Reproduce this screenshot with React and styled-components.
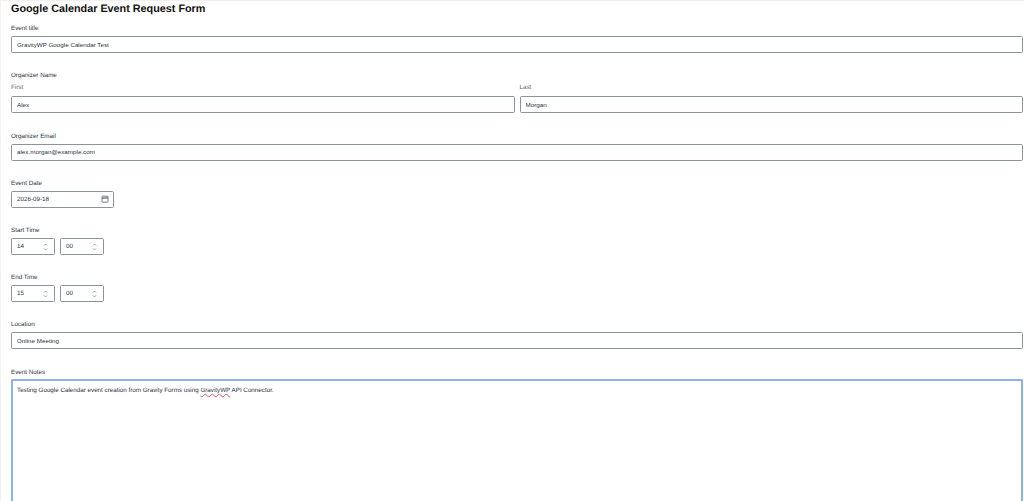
import React from "react";
import styled, { createGlobalStyle } from "styled-components";

const Global = createGlobalStyle`
  html, body { margin: 0; padding: 0; height: 501px; overflow: hidden; background: #fff; }
  body { font-family: "Liberation Sans", Arial, sans-serif; color: #1d2733; text-rendering: geometricPrecision; }
`;
const Page = styled.main`
  height: 501px; box-sizing: border-box; overflow: hidden;
  padding: 2px 1px 0 11px;
  border-top: 1px solid #f0f0f0;
  border-left: 1px solid #f2f2f2;
`;
const Title = styled.h1`
  margin: 0 0 0 -1px; font-size: 10.8px; line-height: 12px; font-weight: 700; color: #111;
  height: 12px;
`;
const Form = styled.form`
  display: flex; flex-direction: column; gap: 18.2px; margin: 9.3px 0 0 -1px;
`;
const Field = styled.div`
  display: flex; flex-direction: column;
`;
const Label = styled.label`
  font-size: 6.25px; line-height: 10px; height: 8px; color: #2b3440; margin-bottom: ${p => p.$gap ?? 4}px;
`;
const SubLabel = styled.span`
  font-size: 6.25px; line-height: 10px; height: 8px; color: #5f6670; display: block; margin-bottom: 5px;
`;
const Input = styled.input`
  box-sizing: border-box; display: block; width: 100%; height: 17px; padding: 0 5px 1px;
  border: 1px solid #8e929b; border-radius: 1.5px; background: #fff;
  font: 6.25px/14px "Liberation Sans", Arial, sans-serif; color: #2b3440; outline: none;
`;
const Columns = styled.div`
  display: grid; grid-template-columns: 1fr 1fr; gap: 5px;
`;
const Control = styled.div`
  box-sizing: border-box; display: flex; align-items: center; justify-content: space-between;
  height: 17px; width: ${p => p.$w}px; padding: 0 ${p => p.$pr ?? 6}px 0 5px;
  border: 1px solid #8e929b; border-radius: 1.5px; background: #fff;
  font-size: 6.25px; color: #2b3440;
`;
const TimeRow = styled.div`
  display: flex; gap: 5px;
`;
const Notes = styled.div`
  box-sizing: border-box; height: 160px; padding: 5.5px 4px;
  border: 2px solid #8fb0f0; border-bottom: 0; border-radius: 2px 2px 0 0; background: #fff;
  font-size: 6.25px; line-height: 9px; color: #2b3440;
`;
const Misspelled = styled.span`
  text-decoration: underline wavy #e0555f 0.4px; text-underline-offset: 0.5px;
`;

const Stepper = () => (
  <svg width="5" height="8" viewBox="0 0 5 8" fill="none" stroke="#7b7f87" strokeWidth="0.7">
    <path d="M1 2.6 2.5 1 4 2.6M1 5.4 2.5 7 4 5.4" />
  </svg>
);
const Cal = () => (
  <svg width="8" height="8" viewBox="0 0 8 8" fill="none" stroke="#5b6068" strokeWidth="0.8">
    <rect x="1" y="1.2" width="6" height="6" rx="0.5" />
    <path d="M1 3h6" strokeWidth="1.2" />
  </svg>
);
const Time = ({ h }) => (
  <TimeRow>
    <Control $w={44}>{h}<Stepper /></Control>
    <Control $w={44}>00<Stepper /></Control>
  </TimeRow>
);

export default function App() {
  return (
    <Page>
      <Global />
      <Title>Google Calendar Event Request Form</Title>
      <Form>
        <Field>
          <Label>Event title</Label>
          <Input readOnly value="GravityWP Google Calendar Test" />
        </Field>
        <Field>
          <Label>Organizer Name</Label>
          <Columns>
            <div><SubLabel>First</SubLabel><Input readOnly value="Alex" /></div>
            <div><SubLabel>Last</SubLabel><Input readOnly value="Morgan" /></div>
          </Columns>
        </Field>
        <Field>
          <Label>Organizer Email</Label>
          <Input readOnly value="alex.morgan@example.com" />
        </Field>
        <Field>
          <Label>Event Date</Label>
          <Control $w={103} $pr={4}>2026-09-18<Cal /></Control>
        </Field>
        <Field>
          <Label>Start Time</Label>
          <Time h="14" />
        </Field>
        <Field>
          <Label>End Time</Label>
          <Time h="15" />
        </Field>
        <Field>
          <Label>Location</Label>
          <Input readOnly value="Online Meeting" />
        </Field>
        <Field>
          <Label $gap={3}>Event Notes</Label>
          <Notes>Testing Google Calendar event creation from Gravity Forms using <Misspelled>GravityWP</Misspelled> API Connector.</Notes>
        </Field>
      </Form>
    </Page>
  );
}
